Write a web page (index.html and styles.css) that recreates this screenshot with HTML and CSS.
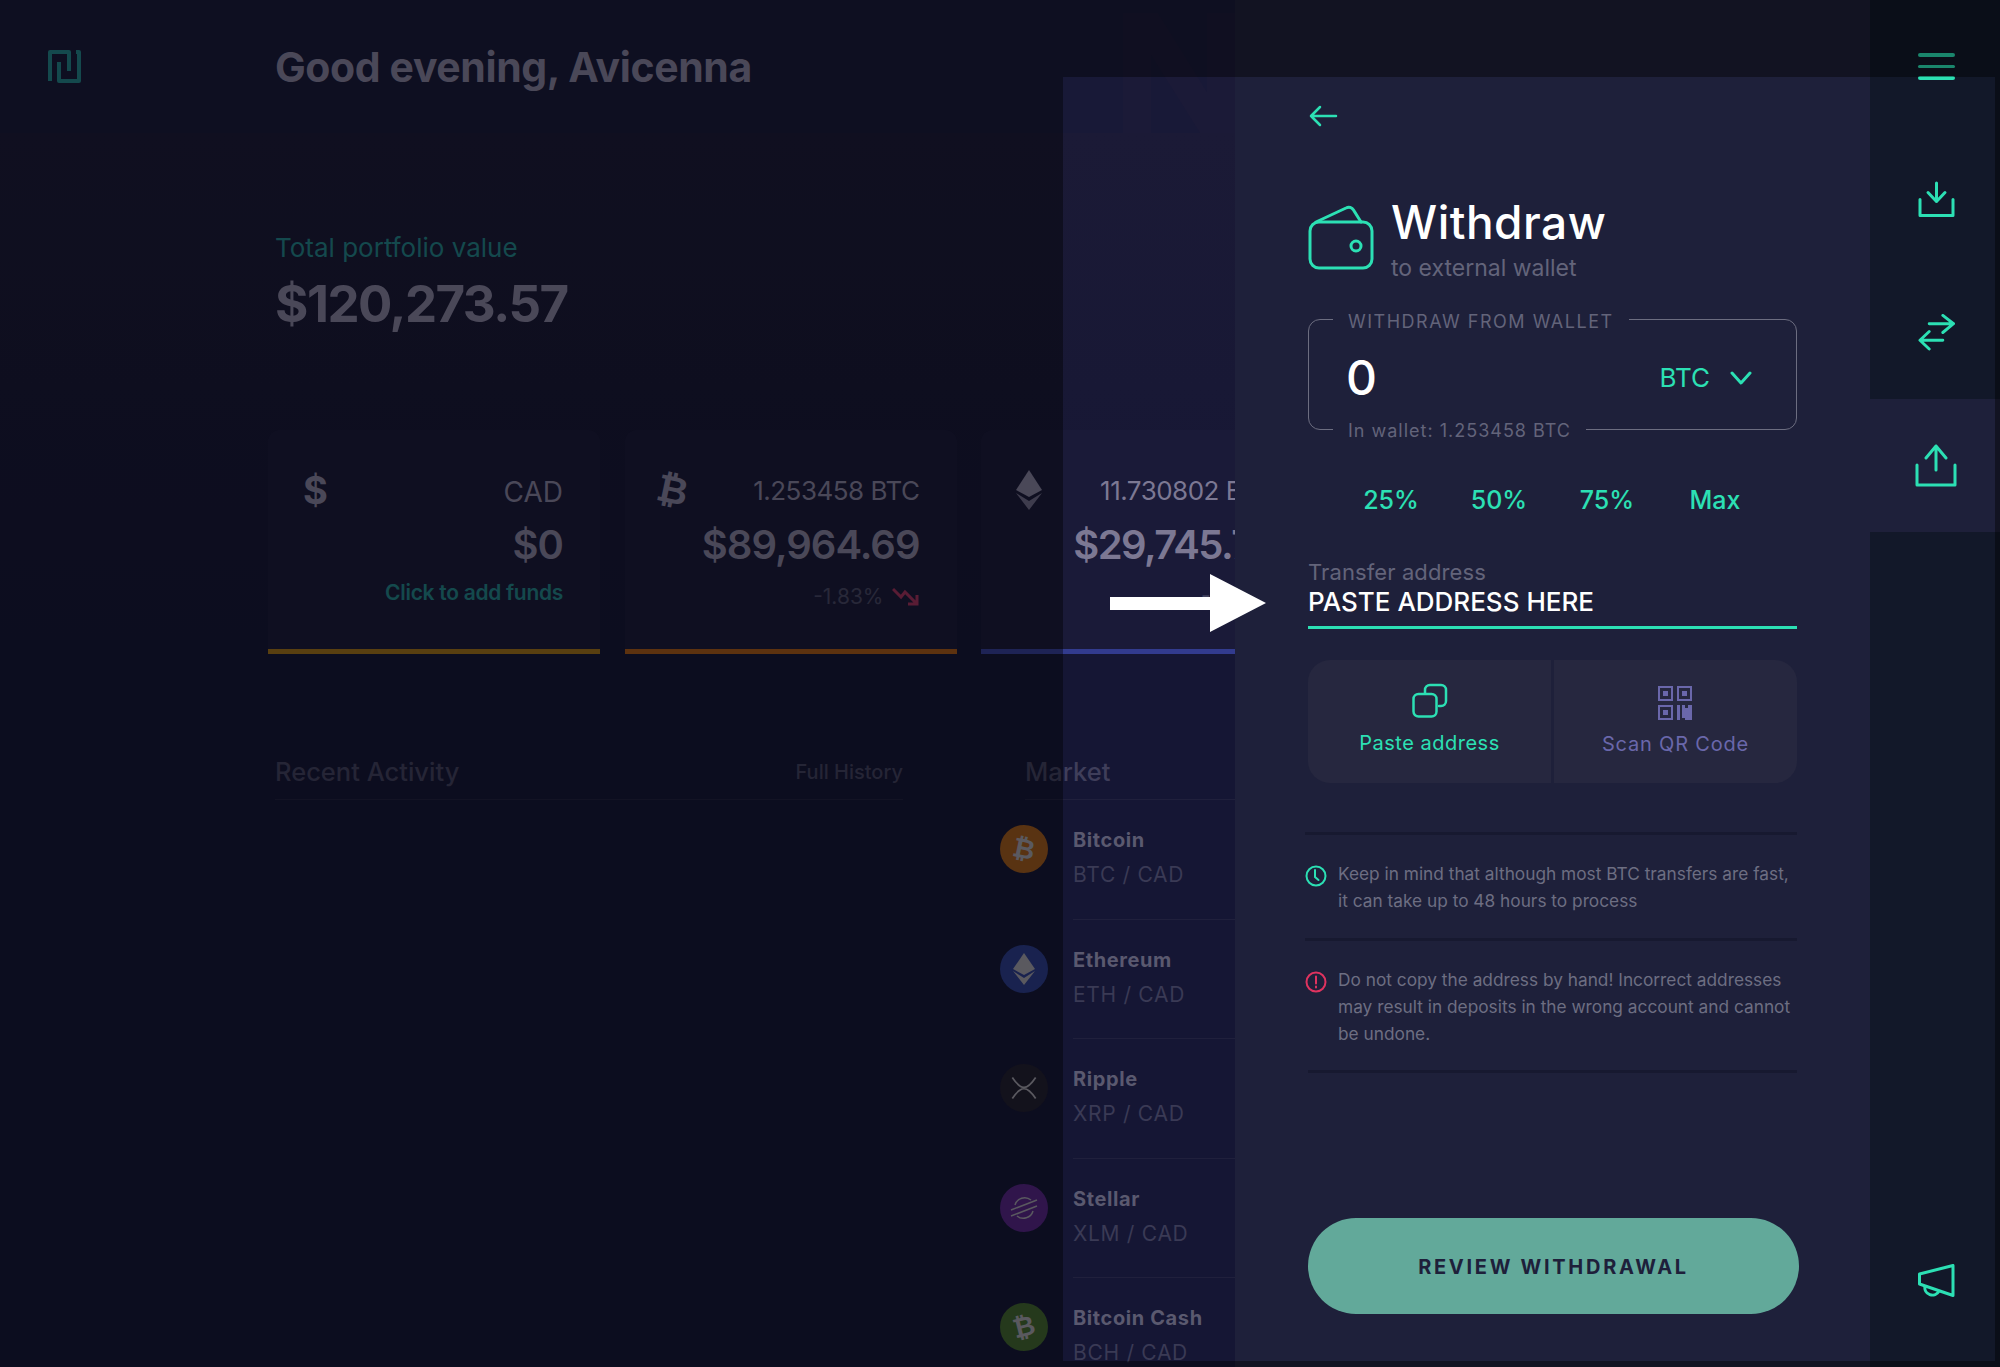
FILE: index.html
```html
<!DOCTYPE html>
<html lang="en">
<head>
  <meta charset="UTF-8">
  <meta name="viewport" content="width=device-width, initial-scale=1.0">
  <title>Withdraw</title>
  <link rel="stylesheet" href="styles.css">
</head>
<body>
  <div class="page">
    <!-- Dashboard behind the drawer -->
    <main class="dash">
      <svg class="logo" viewBox="0 0 36 34"><path d="M3 32V3h19v19M12 13v19h20V3h-3"/></svg>
      <svg class="watermark" viewBox="0 0 112 120"><path d="M0 0h35l49 79V0h28v120H77L28 42v78H0z"/></svg>

      <header class="dash-head">
        <h1>Good evening, Avicenna</h1>
      </header>

      <section class="total">
        <p class="total-label">Total portfolio value</p>
        <p class="total-value">$120,273.57</p>
      </section>

      <section class="cards">
        <div class="card card-cad">
          <div class="card-top">
            <span class="card-icon">$</span>
            <span class="card-amount">CAD</span>
          </div>
          <div class="card-value">$0</div>
          <div class="card-foot card-add">Click to add funds</div>
        </div>
        <div class="card card-btc">
          <div class="card-top">
            <span class="card-icon card-icon-btc">₿</span>
            <span class="card-amount">1.253458 BTC</span>
          </div>
          <div class="card-value">$89,964.69</div>
          <div class="card-foot">
            -1.83%
            <svg class="trend" viewBox="0 0 28 20"><path d="M1 2l8 8 4-5 12 12M25 8v9h-9"/></svg>
          </div>
        </div>
        <div class="card card-eth">
          <div class="card-top">
            <svg class="card-eth-icon" viewBox="0 0 26 40"><path d="M13 0l13 20-13 7-13-7z"/><path class="eth-low" d="M13 31l13-8-13 17-13-17z"/></svg>
            <span class="card-amount">11.730802 ETH</span>
          </div>
          <div class="card-value">$29,745.72</div>
          <div class="card-foot">-4.08%</div>
        </div>
      </section>

      <section class="lower">
        <div class="activity">
          <div class="lower-head">
            <h2>Recent Activity</h2>
            <a class="history">Full History</a>
          </div>
        </div>
        <div class="market">
          <div class="lower-head">
            <h2>Market</h2>
          </div>
          <div class="market-row">
            <span class="coin coin-btc"><span class="coin-glyph">₿</span></span>
            <div class="market-text"><div class="coin-name">Bitcoin</div><div class="coin-pair">BTC / CAD</div></div>
          </div>
          <div class="market-row">
            <span class="coin coin-eth">
              <svg viewBox="0 0 24 32"><path d="M12 0l11 16-11 6-11-6z"/><path d="M12 25l11-7-11 14-11-14z"/></svg>
            </span>
            <div class="market-text"><div class="coin-name">Ethereum</div><div class="coin-pair">ETH / CAD</div></div>
          </div>
          <div class="market-row">
            <span class="coin coin-xrp">
              <svg class="coin-line" viewBox="0 0 24 20"><path d="M2 1C6 7 9 9.500 12 9.500S18 7 22 1M2 19C6 13 9 10.500 12 10.500S18 13 22 19"/></svg>
            </span>
            <div class="market-text"><div class="coin-name">Ripple</div><div class="coin-pair">XRP / CAD</div></div>
          </div>
          <div class="market-row">
            <span class="coin coin-xlm">
              <svg class="coin-line" viewBox="0 0 28 24"><path d="M5 9a10 10 0 0 1 16-5M23 15a10 10 0 0 1-16 5M1 14L27 4M1 20L27 10"/></svg>
            </span>
            <div class="market-text"><div class="coin-name">Stellar</div><div class="coin-pair">XLM / CAD</div></div>
          </div>
          <div class="market-row">
            <span class="coin coin-bch"><span class="coin-glyph coin-glyph-bch">₿</span></span>
            <div class="market-text"><div class="coin-name">Bitcoin Cash</div><div class="coin-pair">BCH / CAD</div></div>
          </div>
        </div>
      </section>
    </main>

    <!-- Withdraw drawer -->
    <section class="drawer">
      <svg class="back icon" viewBox="0 0 29 22"><path d="M27 11H2M11 2l-9 9 9 9"/></svg>

      <div class="title-row">
        <svg class="wallet icon" viewBox="0 0 66 66">
          <rect x="2" y="17" width="62" height="46" rx="9"/>
          <path d="M8 17L38 3c3-1.500 6-.5 7.500 2L53 17"/>
          <circle cx="48" cy="41" r="5"/>
        </svg>
        <div>
          <h2 class="title">Withdraw</h2>
          <p class="subtitle">to external wallet</p>
        </div>
      </div>

      <div class="amount-box">
        <span class="box-legend box-legend-top">WITHDRAW FROM WALLET</span>
        <span class="amount">0</span>
        <span class="currency">BTC
          <svg class="chevron icon" viewBox="0 0 22 15"><path d="M2 2l9 10 9-10"/></svg>
        </span>
        <span class="box-legend box-legend-bottom">In wallet: 1.253458 BTC</span>
      </div>

      <div class="percents">
        <span>25%</span>
        <span>50%</span>
        <span>75%</span>
        <span>Max</span>
      </div>

      <div class="address">
        <div class="address-label">Transfer address</div>
        <div class="address-input">PASTE ADDRESS HERE</div>
      </div>

      <div class="address-actions">
        <div class="action action-paste">
          <svg class="icon" viewBox="0 0 36 36">
            <rect x="1.500" y="12" width="23" height="22.500" rx="5"/>
            <path d="M13 11V8a5 5 0 0 1 5-5h11a5 5 0 0 1 5 5v11a5 5 0 0 1-5 5h-2"/>
          </svg>
          <span>Paste address</span>
        </div>
        <div class="action action-scan">
          <svg class="qr" viewBox="0 0 35 35">
            <path d="M0 0h15v15H0zM2 2v11h11V2zM19 0h15v15H19zM21 2v11h11V2zM0 19h15v15H0zM2 21v11h11V21z"/>
            <path d="M5 5h5v5H5zM24 5h5v5h-5zM5 24h5v5H5z"/>
            <path d="M19 19h3v15h-3zM24 19h3v3h3v-3h4v15h-10zM24 32h3v2h-3z"/>
          </svg>
          <span>Scan QR Code</span>
        </div>
      </div>

      <div class="tips">
        <div class="tip">
          <svg class="tip-icon tip-clock" viewBox="0 0 22 22"><circle cx="11" cy="11" r="9.500"/><path d="M10 5v7l3.500 3"/></svg>
          <p>Keep in mind that although most BTC transfers are fast,<br>it can take up to 48 hours to process</p>
        </div>
        <div class="tip">
          <svg class="tip-icon tip-alert" viewBox="0 0 22 22"><circle cx="11" cy="11" r="9.500"/><path d="M11 5.500v7M11 15.500v1"/></svg>
          <p>Do not copy the address by hand! Incorrect addresses<br>may result in deposits in the wrong account and cannot<br>be undone.</p>
        </div>
      </div>

      <button class="review">REVIEW WITHDRAWAL</button>
    </section>

    <!-- Right icon rail -->
    <nav class="rail">
      <div class="rail-item">
        <div class="burger"><i></i><i></i><i></i></div>
      </div>
      <div class="rail-item">
        <svg class="icon rail-icon" viewBox="0 0 37 36"><path d="M18.500 1.500V20M10 11l8.500 9 8.500-9M2 18v16h33V18"/></svg>
      </div>
      <div class="rail-item">
        <svg class="icon rail-icon" viewBox="0 0 37 38"><path d="M11 10h25M25 1.500l11 8.500-11 9M25 27H2M11 18l-9.500 9 9.500 9"/></svg>
      </div>
      <div class="rail-item rail-active">
        <svg class="icon rail-upload" viewBox="0 0 42 43"><path d="M21 2v24M11 14L21 2l10 12M2 21v20h38V21"/></svg>
      </div>
      <div class="rail-item rail-bottom">
        <svg class="icon rail-icon" viewBox="0 0 37 37"><path d="M1.500 10L35 1.500v30L1.500 20zM7 22a7.500 7.500 0 0 0 14 5"/></svg>
      </div>
    </nav>

    <!-- Dimmed surroundings, with the window left clear -->
    <div class="spotlight"></div>

    <svg class="pointer" viewBox="0 0 156 58"><path d="M0 23h100V0l56 29-56 29V36H0z"/></svg>
  </div>
</body>
</html>
```

FILE: styles.css
```css
* {
  box-sizing: border-box;
}

html, body {
  margin: 0;
  height: 100%;
  overflow: hidden;
}

body {
  font-family: Inter, "Open Sans", sans-serif;
  background: #161736;
}

h1, h2, p {
  margin: 0;
}

.page {
  position: relative;
  display: grid;
  grid-template-columns: 1235px 635px 130px;
  width: 2000px;
  height: 1367px;
  overflow: hidden;
}

.icon {
  display: block;
  fill: none;
  stroke: #2ce0b4;
  stroke-width: 3;
  stroke-linecap: round;
  stroke-linejoin: round;
}

/* dashboard */
.dash {
  position: relative;
  overflow: hidden;
  padding-left: 275px;
  background: linear-gradient(#181937 133px, #1b1a36 133px, #151634 640px);
  color: #7c7893;
}

.logo {
  position: absolute;
  left: 47px;
  top: 49px;
  width: 36px;
  height: 34px;
  fill: none;
  stroke: #227a80;
  stroke-width: 4;
  stroke-linejoin: round;
}

.watermark {
  position: absolute;
  left: 1123px;
  top: 13px;
  width: 112px;
  height: 120px;
  fill: #1b1a37;
}

.dash-head {
  height: 133px;
  padding-top: 42px;
}

.dash-head h1 {
  font-size: 41px;
  line-height: 50px;
  font-weight: 700;
  letter-spacing: -0.4px;
}

.total {
  padding-top: 99px;
}

.total-label {
  font-size: 26px;
  line-height: 32px;
  color: #227a80;
}

.total-value {
  margin-top: 9px;
  font-size: 51px;
  line-height: 62px;
  font-weight: 700;
  letter-spacing: -1.5px;
}

.cards {
  display: grid;
  grid-template-columns: repeat(3, 332px);
  column-gap: 24.500px;
  margin: 95px 0 0 -7px;
}

.card {
  height: 224px;
  padding: 42px 37px 0 35px;
  border-bottom: 5px solid #94691c;
  border-radius: 12px 12px 0 0;
  background: #1a1a38;
}

.card-btc {
  border-bottom-color: #9c5419;
}

.card-eth {
  border-bottom-color: #323b8e;
}

.card-top {
  display: flex;
  justify-content: space-between;
  align-items: center;
  height: 36px;
}

.card-icon {
  font-size: 38px;
  font-weight: 700;
}

.card-icon-btc {
  font-family: "DejaVu Sans", sans-serif;
  font-size: 38px;
  margin-left: -3px;
  transform: rotate(12deg);
}

.card-eth-icon {
  width: 26px;
  height: 40px;
  fill: #7c7893;
}

.card-eth-icon .eth-low {
  opacity: 0.8;
}

.card-amount {
  font-size: 26px;
  letter-spacing: -0.5px;
}

.card-cad .card-amount {
  padding-top: 3px;
  font-size: 28px;
  letter-spacing: 0;
}

.card-value {
  margin-top: 12px;
  font-size: 40px;
  line-height: 50px;
  font-weight: 600;
  letter-spacing: -1px;
  text-align: right;
}

.card-eth .card-value {
  letter-spacing: -1.600px;
}

.card-foot {
  display: flex;
  justify-content: flex-end;
  align-items: center;
  gap: 8px;
  margin-top: 13px;
  font-size: 21px;
  line-height: 28px;
  color: #43435f;
}

.card-add {
  margin-top: 9px;
  font-weight: 600;
  font-size: 21px;
  letter-spacing: -0.3px;
  color: #227a80;
}

.trend {
  width: 28px;
  height: 20px;
  fill: none;
  stroke: #952f58;
  stroke-width: 3;
}

.lower {
  display: grid;
  grid-template-columns: 750px 1fr;
  margin-top: 102px;
}

.activity {
  padding-right: 122px;
}

.lower-head {
  display: flex;
  justify-content: space-between;
  align-items: center;
  height: 44px;
  padding-bottom: 12px;
  border-bottom: 1px solid #20203c;
}

.lower-head h2 {
  font-size: 25.500px;
  line-height: 32px;
  font-weight: 500;
  color: #3f3e5a;
}

.history {
  font-size: 20px;
  font-weight: 500;
  color: #3f3e5a;
}

.market-row {
  display: flex;
  gap: 25px;
  height: 119.600px;
  margin-left: -25px;
}

.coin {
  display: flex;
  flex: none;
  align-items: center;
  justify-content: center;
  width: 48px;
  height: 48px;
  margin-top: 25px;
  border-radius: 50%;
}

.coin svg {
  width: 24px;
  height: 32px;
  fill: #96949f;
}

.coin svg.coin-line {
  width: 28px;
  height: 24px;
  fill: none;
  stroke: #96949f;
  stroke-width: 1.500;
}

.coin-glyph {
  font-family: "DejaVu Sans", sans-serif;
  font-size: 27px;
  font-weight: 700;
  color: #96949f;
  transform: rotate(12deg);
}

.coin-glyph-bch {
  transform: rotate(-14deg);
}

.coin-btc {
  background: #95561f;
}

.coin-eth {
  background: #2a3a84;
}

.coin-xrp {
  background: #201e30;
}

.coin-xlm {
  background: #50247e;
}

.coin-bch {
  background: #3e6030;
}

.market-text {
  flex: 1;
  padding-top: 26px;
  border-bottom: 1px solid #20203c;
}

.coin-name {
  font-size: 20px;
  line-height: 28px;
  font-weight: 700;
  letter-spacing: 0.6px;
  color: #5a596f;
}

.coin-pair {
  margin-top: 6px;
  font-size: 21px;
  line-height: 30px;
  letter-spacing: 0.7px;
  color: #3a3a55;
}

/* drawer */
.drawer {
  display: flex;
  flex-direction: column;
  padding: 105px 73px 53px;
  background: #1e203a;
  color: #fff;
}

.back {
  width: 29px;
  height: 22px;
  margin-left: 1px;
  stroke-width: 2.500;
}

.title-row {
  display: flex;
  gap: 17px;
  margin-top: 70px;
}

.wallet {
  flex: none;
  width: 66px;
  height: 66px;
  margin-top: 8px;
}

.title {
  font-size: 46px;
  line-height: 50px;
  font-weight: 500;
  letter-spacing: 0.5px;
}

.subtitle {
  margin-top: 6px;
  font-size: 23px;
  line-height: 30px;
  color: #63647a;
}

.amount-box {
  position: relative;
  display: flex;
  justify-content: space-between;
  align-items: center;
  height: 111px;
  margin-top: 36px;
  padding: 5px 44px 0 37px;
  border: 1.500px solid #6c6d80;
  border-radius: 12px;
}

.box-legend {
  position: absolute;
  left: 24px;
  padding: 0 15px;
  font-size: 18px;
  line-height: 24px;
  white-space: nowrap;
  background: #1e203a;
  color: #63647a;
}

.box-legend-top {
  top: -10px;
  letter-spacing: 1.500px;
}

.box-legend-bottom {
  bottom: -14px;
  letter-spacing: 1px;
}

.amount {
  font-size: 48px;
  font-weight: 500;
}

.currency {
  display: flex;
  align-items: center;
  gap: 20px;
  font-size: 26px;
  color: #2ce0b4;
}

.chevron {
  width: 22px;
  height: 15px;
  margin-top: 3px;
}

.percents {
  display: grid;
  grid-template-columns: repeat(4, 108px);
  margin: 54px 0 0 29px;
  font-size: 25px;
  line-height: 32px;
  font-weight: 500;
  text-align: center;
  color: #2ce0b4;
}

.address {
  margin-top: 41px;
  padding-bottom: 9px;
  border-bottom: 3px solid #2ce0b4;
}

.address-label {
  font-size: 22px;
  line-height: 30px;
  letter-spacing: 0.1px;
  color: #63647a;
}

.address-input {
  font-size: 26px;
  line-height: 30px;
  font-weight: 500;
}

.address-actions {
  display: grid;
  grid-template-columns: 1fr 1fr;
  gap: 3px;
  height: 123px;
  margin-top: 31px;
  border-radius: 22px;
  overflow: hidden;
}

.action {
  display: flex;
  flex-direction: column;
  align-items: center;
  padding-top: 22px;
  background: #26273f;
  font-size: 20px;
  line-height: 26px;
  letter-spacing: 0.5px;
}

.action-paste {
  color: #2ce0b4;
}

.action-paste svg {
  width: 36px;
  height: 36px;
  stroke-width: 2.500;
}

.action-paste span {
  margin-top: 12px;
}

.action-scan {
  color: #6a67ab;
  letter-spacing: 0.8px;
}

.qr {
  width: 35px;
  height: 35px;
  margin-top: 4px;
  fill: #6a67ab;
  fill-rule: evenodd;
}

.action-scan span {
  margin-top: 10px;
}

.tips {
  margin-top: 49px;
  border-bottom: 3px solid #171930;
}

.tip {
  display: flex;
  gap: 11px;
  margin-left: -3px;
  padding: 25px 0 24px;
  border-top: 3px solid #171930;
}

.tip + .tip {
  padding-bottom: 23px;
}

.tip p {
  font-size: 17.300px;
  line-height: 27px;
  white-space: nowrap;
  color: #6d6e82;
}

.tip-icon {
  flex: none;
  width: 22px;
  height: 22px;
  margin-top: 5px;
  fill: none;
  stroke-width: 2;
  stroke-linecap: round;
}

.tip-clock {
  stroke: #2ce0b4;
}

.tip-alert {
  stroke: #e0335f;
}

.review {
  height: 96px;
  width: 491px;
  margin-top: auto;
  padding-top: 2px;
  border: none;
  border-radius: 48px;
  background: #62a99a;
  color: #1e203a;
  font-family: inherit;
  font-size: 20px;
  font-weight: 700;
  letter-spacing: 2.700px;
}

/* rail */
.rail {
  display: flex;
  flex-direction: column;
  padding-bottom: 18px;
  background: #121829;
}

.rail-item {
  display: flex;
  flex: none;
  align-items: center;
  justify-content: center;
  height: 133px;
  padding-left: 2px;
}

.rail-active {
  background: #1e203a;
}

.rail-bottom {
  margin-top: auto;
}

.rail-icon {
  width: 37px;
  height: 37px;
}

.rail-upload {
  width: 42px;
  height: 43px;
}

.burger {
  display: flex;
  flex-direction: column;
  gap: 8px;
  width: 37px;
}

.burger i {
  height: 3.500px;
  border-radius: 2px;
  background: #2ce0b4;
}

/* overlays */
.spotlight {
  position: absolute;
  left: 1063px;
  top: 77px;
  width: 932px;
  height: 1284px;
  box-shadow: 0 0 0 2000px rgba(0, 0, 0, 0.4);
  pointer-events: none;
}

.pointer {
  position: absolute;
  left: 1110px;
  top: 574px;
  width: 156px;
  height: 58px;
  fill: #fff;
}
```
